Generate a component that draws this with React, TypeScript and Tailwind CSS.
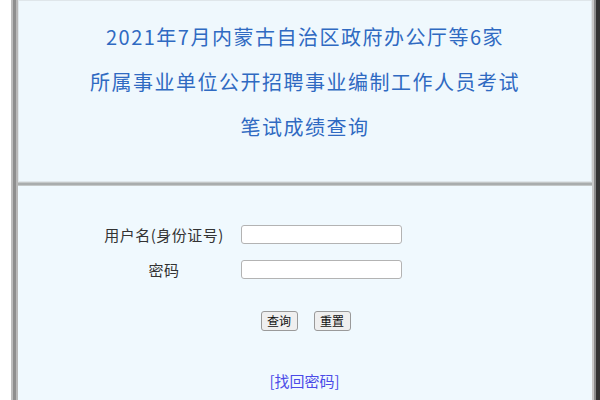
export default function App() {
  const title = "text-[20px] leading-[20px] tracking-[1.5px] text-[#2f6ac2] font-['Noto_Sans_CJK_SC',sans-serif]"
  const label = "w-[130px] text-center text-[15px] leading-[19px] tracking-[0.5px] text-[#333]"
  const field = "ml-[12px] h-[19px] w-[161px] rounded-[3px] border border-[#b3b3b3] bg-white"
  const btn = "h-[20px] w-[37px] rounded-[3px] border border-[#9a9a9a] bg-[#efefef] text-[12px] leading-[18px] text-[#111]"
  return (
    <div className="flex h-[400px] w-[600px] overflow-hidden bg-white font-['Noto_Sans_CJK_SC','Noto_Sans',sans-serif]">
      <div className="ml-[11px] flex flex-1 border-l-2 border-r-4 border-l-[#bdbdbd] border-r-[#333333]">
        <div className="flex flex-1 border-l-[3px] border-r-2 border-l-[#8e8e8e] border-r-[#8a8a8a]">
          <div className="flex flex-1 flex-col border-l-2 border-r-2 border-l-[#b8b8b8] border-r-[#c8c8c8]">
            <div className="flex h-[182px] flex-col items-center border border-[#dfe6ea] bg-[#eff8fd] pt-[26px]">
              <div className={title}>2021年7月内蒙古自治区政府办公厅等6家</div>
              <div className={`${title} mt-[25px]`}>所属事业单位公开招聘事业编制工作人员考试</div>
              <div className={`${title} mt-[25px]`}>笔试成绩查询</div>
            </div>
            <div className="h-[4px] border-y border-[#c4c8c8] bg-[#a9adad]" />
            <div className="flex flex-1 flex-col bg-[#f0f9fe] pt-[39px]">
              <div className="flex flex-col gap-[16px] pl-[81px]">
                <div className="flex items-center">
                  <label className={label}>用户名(身份证号)</label>
                  <input className={field} />
                </div>
                <div className="flex items-center">
                  <label className={label}>密码</label>
                  <input type="password" className={field} />
                </div>
              </div>
              <div className="mt-[32px] flex justify-center gap-[16px] pl-[1px]">
                <button className={btn}>查询</button>
                <button className={btn}>重置</button>
              </div>
              <div className="mt-[40px] flex justify-center pr-[1px]">
                <a className="text-[15px] leading-[20px] text-[#4b4be8]">[找回密码]</a>
              </div>
            </div>
          </div>
        </div>
      </div>
    </div>
  )
}
